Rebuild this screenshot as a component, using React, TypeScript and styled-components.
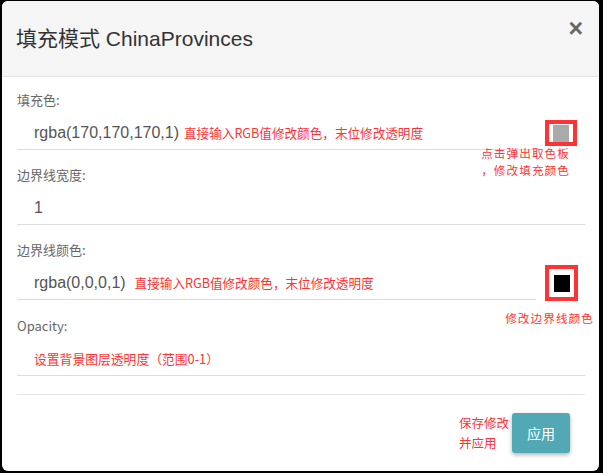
import React from "react";
import styled, { createGlobalStyle } from "styled-components";

const Global = createGlobalStyle`
  html, body { margin: 0; padding: 0; background: #000; }
  * { box-sizing: border-box; }
`;

const Page = styled.div`
  width: 603px;
  height: 473px;
  padding: 1px 4px 2px 2px;
  background: #000;
`;

const Modal = styled.div`
  width: 597px;
  height: 470px;
  background: #fff;
  border-radius: 6px;
  display: flex;
  flex-direction: column;
  overflow: hidden;
  font-family: "Liberation Sans", "Noto Sans CJK SC", sans-serif;
`;

const Header = styled.div`
  height: 76px;
  flex: none;
  background: #f5f5f5;
  border-bottom: 1px solid #e5e5e5;
  display: flex;
  align-items: center;
  justify-content: space-between;
  padding: 0 16px 0 14px;
`;

const Title = styled.h4`
  margin: 0;
  font-size: 21px;
  font-weight: normal;
  color: #333;
  line-height: 1.2;
`;

const Close = styled.button`
  align-self: flex-start;
  margin-top: 15px;
  border: none;
  background: none;
  padding: 0;
  font-family: "Liberation Sans", Arial, sans-serif;
  font-size: 25px;
  font-weight: bold;
  line-height: 1;
  color: #666;
  cursor: pointer;
`;

const Body = styled.div`
  padding: 13px 14px 0 15px;
  display: flex;
  flex-direction: column;
`;

const Group = styled.div<{ $last?: boolean }>`
  display: flex;
  flex-direction: column;
  margin-bottom: ${(p) => (p.$last ? 0 : 15)}px;
`;

const Label = styled.label`
  align-self: flex-start;
  font-family: "Noto Sans CJK SC", "Liberation Sans", sans-serif;
  font-size: 13px;
  line-height: 20px;
  height: 20px;
  color: #666;
`;

const Row = styled.div`
  display: flex;
  align-items: flex-start;
`;

const Field = styled.div`
  flex: 1;
  height: 40px;
  border-bottom: 1px solid #dcdcdc;
  padding: 6px 0 0 17px;
  display: flex;
  align-items: center;
  white-space: nowrap;
`;

const Value = styled.span`
  font-family: "Liberation Sans", Arial, sans-serif;
  font-size: 16px;
  color: #555;
`;

const Hint = styled.span<{ $gap?: number }>`
  margin-left: ${(p) => p.$gap ?? 5}px;
  font-family: "Noto Sans CJK SC", sans-serif;
  font-size: 12.6px;
  color: #ff3333;
`;

const Placeholder = styled.span`
  font-family: "Noto Sans CJK SC", sans-serif;
  font-size: 12.8px;
  color: #ff3333;
`;

const Swatch = styled.div<{ $w: number; $h: number; $top: number; $right: number }>`
  position: relative;
  flex: none;
  width: ${(p) => p.$w}px;
  height: ${(p) => p.$h}px;
  margin: ${(p) => p.$top}px ${(p) => p.$right}px 0 9px;
  border: 4px solid #ff3333;
  display: flex;
  align-items: center;
  justify-content: center;
`;

const Chip = styled.div<{ $color: string }>`
  width: 16px;
  height: 17px;
  background: ${(p) => p.$color};
`;

const Note = styled.div<{ $right: number; $top: number }>`
  position: absolute;
  right: ${(p) => p.$right}px;
  top: calc(100% + ${(p) => p.$top}px);
  font-family: "Noto Sans CJK SC", sans-serif;
  font-size: 11.6px;
  letter-spacing: 1.1px;
  line-height: 17px;
  color: #ff3333;
  white-space: nowrap;
  text-align: left;
`;

const Divider = styled.hr`
  margin: 18px 0 0;
  border: none;
  border-top: 1px solid #e5e5e5;
`;

const Footer = styled.div`
  display: flex;
  justify-content: flex-end;
  align-items: center;
  gap: 3px;
  padding: 18px 15px 18px 0;
`;

const FooterNote = styled.div`
  font-family: "Noto Sans CJK SC", sans-serif;
  font-size: 12.5px;
  line-height: 20px;
  color: #ff3333;
`;

const ApplyButton = styled.button`
  width: 58px;
  height: 40px;
  border: none;
  border-radius: 3px;
  background: #52a8b4;
  color: #fff;
  font-family: "Noto Sans CJK SC", sans-serif;
  font-size: 14px;
  box-shadow: 0 2px 4px rgba(0, 0, 0, 0.3);
  cursor: pointer;
`;

export default function App() {
  return (
    <Page>
      <Global />
      <Modal>
        <Header>
          <Title>填充模式 ChinaProvinces</Title>
          <Close aria-label="close">×</Close>
        </Header>
        <Body>
          <Group>
            <Label>填充色:</Label>
            <Row>
              <Field>
                <Value>rgba(170,170,170,1)</Value>
                <Hint>直接输入RGB值修改颜色，末位修改透明度</Hint>
              </Field>
              <Swatch $w={32} $h={26} $top={10} $right={8}>
                <Chip $color="#aaaaaa" />
                <Note $right={3} $top={3}>
                  点击弹出取色板
                  <br />
                  ，修改填充颜色
                </Note>
              </Swatch>
            </Row>
          </Group>
          <Group>
            <Label>边界线宽度:</Label>
            <Row>
              <Field>
                <Value>1</Value>
              </Field>
            </Row>
          </Group>
          <Group>
            <Label>边界线颜色:</Label>
            <Row>
              <Field>
                <Value>rgba(0,0,0,1)</Value>
                <Hint $gap={9}>直接输入RGB值修改颜色，末位修改透明度</Hint>
              </Field>
              <Swatch $w={33} $h={36} $top={5} $right={7}>
                <Chip $color="#000000" />
                <Note $right={-20} $top={13}>修改边界线颜色</Note>
              </Swatch>
            </Row>
          </Group>
          <Group $last>
            <Label>Opacity:</Label>
            <Row>
              <Field>
                <Placeholder>设置背景图层透明度（范围0-1）</Placeholder>
              </Field>
            </Row>
          </Group>
          <Divider />
          <Footer>
            <FooterNote>
              保存修改
              <br />
              并应用
            </FooterNote>
            <ApplyButton>应用</ApplyButton>
          </Footer>
        </Body>
      </Modal>
    </Page>
  );
}
